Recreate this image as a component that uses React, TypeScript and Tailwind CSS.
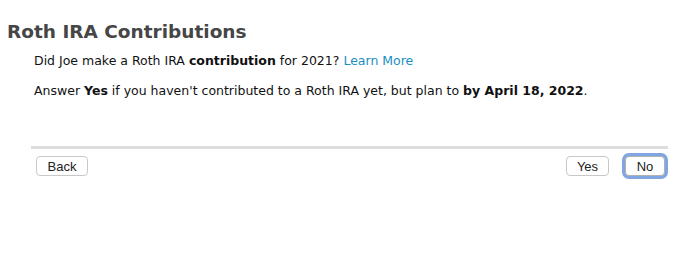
export default function App() {
  return (
    <div className="w-[688px] h-[259px] bg-white font-['DejaVu_Sans',sans-serif] text-[12.5px] text-[#111]">
      <h1 className="pl-[7px] pt-[20px] text-[18.5px] leading-[24px] font-bold text-[#464646]">
        Roth IRA Contributions
      </h1>
      <div className="pl-[34px]">
        <p className="mt-[7px] leading-[20px]">
          Did Joe make a Roth IRA <b>contribution</b> for 2021?{" "}
          <a className="text-[#1a8fc0]">Learn More</a>
        </p>
        <p className="mt-[10px] leading-[20px]">
          Answer <b>Yes</b> if you haven't contributed to a Roth IRA yet, but plan to{" "}
          <b>by April 18, 2022</b>.
        </p>
      </div>
      <div className="ml-[31px] mr-[20px] mt-[45px] h-[3px] bg-[#dddddd]" />
      <div className="ml-[36px] mr-[23px] mt-[7px] flex items-center justify-between font-['Liberation_Sans',sans-serif] text-[13px]">
        <button className="w-[52px] h-[20px] rounded-[4px] border border-[#c8c8c8] bg-white text-[#222]">
          Back
        </button>
        <div className="flex items-center gap-[16px]">
          <button className="w-[43px] h-[20px] rounded-[4px] border border-[#c8c8c8] bg-white text-[#222]">
            Yes
          </button>
          <button className="w-[40px] h-[20px] rounded-[4px] border border-[#b0b0b0] bg-white text-[#222] ring-[3px] ring-[#7fa6e0]">
            No
          </button>
        </div>
      </div>
    </div>
  );
}
